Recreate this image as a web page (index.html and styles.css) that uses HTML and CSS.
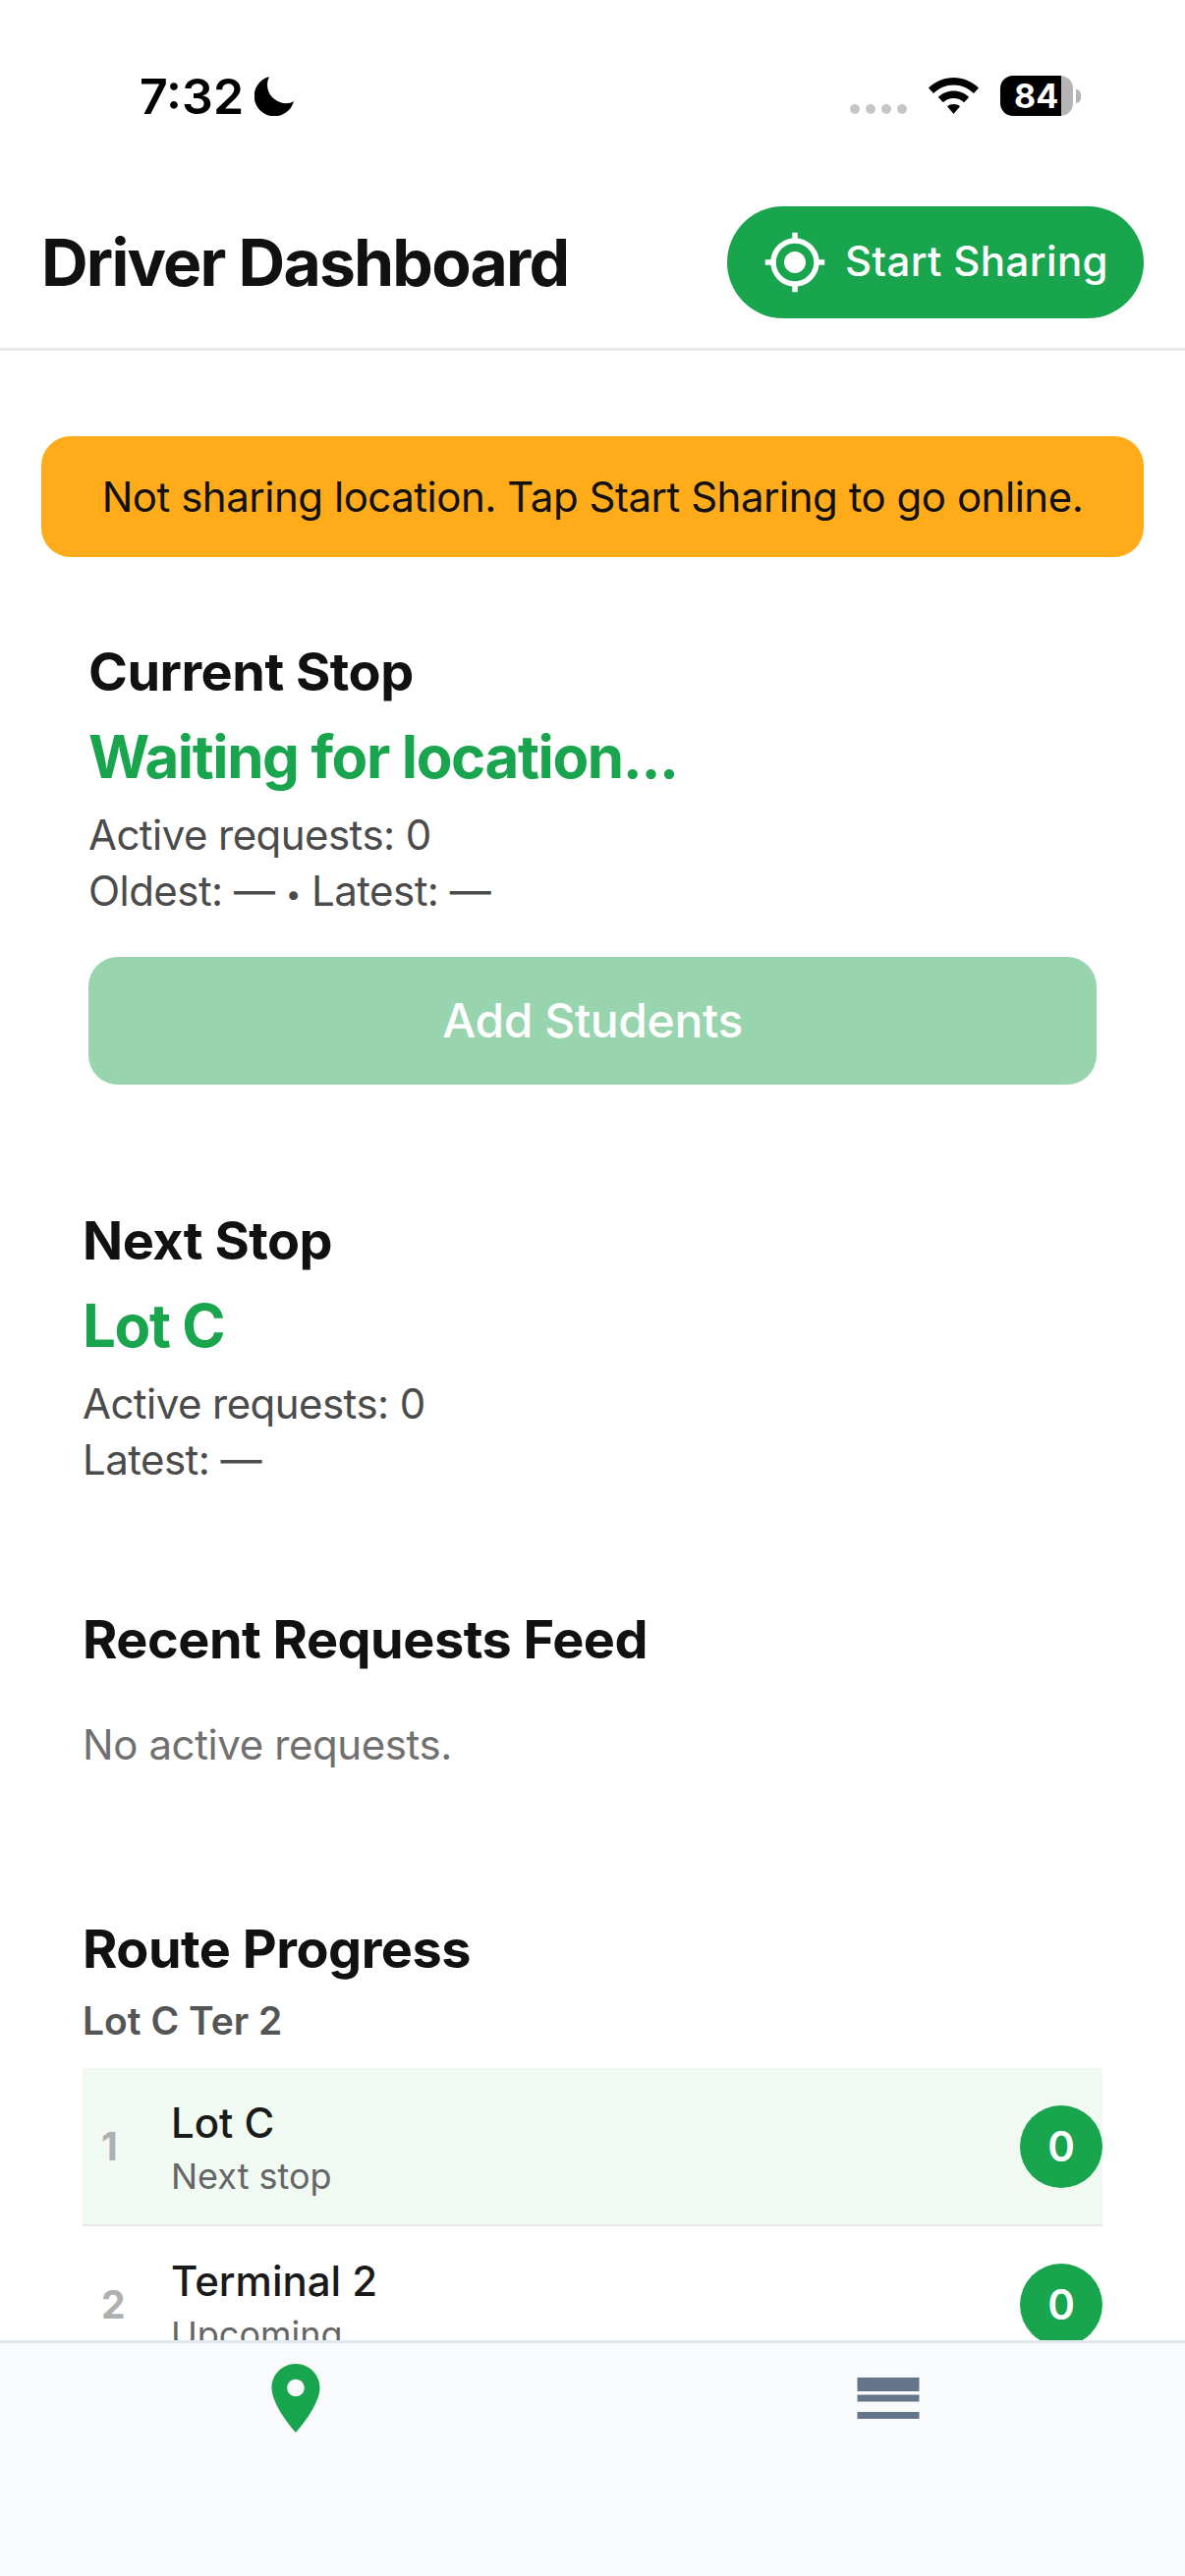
FILE: index.html
```html
<!DOCTYPE html>
<html>

	<head>
		<meta charset="UTF-8">
		<title>Driver Dashboard</title>
		<link rel="stylesheet" href="styles.css">
	</head>

	<body>
		<div class="status-bar">
			<div class="status-left">
				<span class="time">7:32</span>
				<svg class="moon" viewBox="0 0 40 40"><path d="M15 0A20.500 20.500 0 1 0 40 25C36 27.500 31 28 26 26 15 22 10 11 15 0z"/></svg>
			</div>
			<div class="status-right">
				<div class="dots"><i></i><i></i><i></i><i></i></div>
				<svg class="wifi" viewBox="0 0 51 37"><path d="M25.500 0C35 0 44 3.800 51 10.500L46 16C40.500 10.800 33.200 7.500 25.500 7.500S10.500 10.800 5 16L0 10.500C7 3.800 16 0 25.500 0z"/><path d="M25.500 13.500C31.500 13.500 37 15.800 41.200 19.800L36.200 25.200C33.300 22.500 29.500 21 25.500 21S17.700 22.500 14.800 25.200L9.800 19.800C14 15.800 19.500 13.500 25.500 13.500z"/><path d="M25.500 27C28 27 30.200 27.800 32 29.300L25.500 37 19 29.300C20.800 27.800 23 27 25.500 27z"/></svg>
				<div class="battery"><div class="battery-body"><span>84</span></div><div class="battery-nub"></div></div>
			</div>
		</div>

		<div class="header">
			<h1>Driver Dashboard</h1>
			<div class="share-btn">
				<svg viewBox="0 0 24 24"><path d="M12 8c-2.210 0-4 1.790-4 4s1.790 4 4 4 4-1.790 4-4-1.790-4-4-4zm8.940 3c-.460-4.170-3.770-7.480-7.940-7.940V1h-2v2.060C6.830 3.520 3.520 6.830 3.060 11H1v2h2.060c.460 4.170 3.770 7.480 7.940 7.940V23h2v-2.060c4.170-.460 7.480-3.770 7.940-7.940H23v-2h-2.060zM12 19c-3.870 0-7-3.130-7-7s3.130-7 7-7 7 3.130 7 7-3.130 7-7 7z"/></svg>
				<span class="share-label">Start Sharing</span>
			</div>
		</div>

		<div class="main">
			<div class="banner">Not sharing location. Tap Start Sharing to go online.</div>

			<div class="current">
				<h2>Current Stop</h2>
				<div class="stop-name">Waiting for location...</div>
				<p class="meta">Active requests: 0</p>
				<p class="meta">Oldest: — <span class="sep">•</span> Latest: —</p>
				<div class="add-btn">Add Students</div>
			</div>

			<div class="section next">
				<h2>Next Stop</h2>
				<div class="stop-name">Lot C</div>
				<p class="meta">Active requests: 0</p>
				<p class="meta">Latest: —</p>
			</div>

			<div class="section feed">
				<h2>Recent Requests Feed</h2>
				<p class="empty">No active requests.</p>
			</div>

			<div class="section route">
				<h2>Route Progress</h2>
				<div class="route-name">Lot C Ter 2</div>
				<div class="row row-next">
					<span class="num">1</span>
					<div class="row-text">
						<div class="row-title">Lot C</div>
						<div class="row-sub">Next stop</div>
					</div>
					<span class="count">0</span>
				</div>
				<div class="row">
					<span class="num">2</span>
					<div class="row-text">
						<div class="row-title">Terminal 2</div>
						<div class="row-sub">Upcoming</div>
					</div>
					<span class="count">0</span>
				</div>
			</div>
		</div>

		<div class="tabs">
			<div class="tab">
				<svg class="pin" viewBox="0 0 24 24"><path d="M12 2C8.130 2 5 5.130 5 9c0 5.250 7 13 7 13s7-7.750 7-13c0-3.870-3.130-7-7-7zm0 9.500c-1.380 0-2.500-1.120-2.500-2.500s1.120-2.500 2.500-2.500 2.500 1.120 2.500 2.500-1.120 2.500-2.500 2.500z"/></svg>
			</div>
			<div class="tab">
				<svg class="menu" viewBox="0 0 24 24"><path d="M3 18h18v-2H3v2zm0-5h18v-2H3v2zm0-5v2h18V6H3z"/></svg>
			</div>
		</div>
	</body>

</html>
```

FILE: styles.css
```css
* {
	box-sizing: border-box;
}

html, body {
	margin: 0;
	padding: 0;
}

body {
	width: 1206px;
	height: 2622px;
	display: flex;
	flex-direction: column;
	overflow: hidden;
	background-color: #fff;
	font-family: "Inter", "Liberation Sans", sans-serif;
	color: #111;
}

h1, h2, p {
	margin: 0;
}

/* status bar */
.status-bar {
	height: 190px;
	flex-shrink: 0;
	display: flex;
	justify-content: space-between;
	padding: 69px 106px 0 142px;
}

.status-left {
	display: flex;
	align-items: flex-start;
}

.time {
	font-size: 50px;
	font-weight: 600;
	line-height: 58px;
	color: #000;
}

.moon {
	width: 40px;
	height: 40px;
	margin: 9px 0 0 11px;
	fill: #000;
}

.status-right {
	display: flex;
	align-items: flex-start;
}

.dots {
	display: flex;
	gap: 6px;
	margin: 37px 22px 0 0;
}

.dots i {
	display: block;
	width: 10px;
	height: 10px;
	border-radius: 5px;
	background-color: #c6c6c6;
}

.wifi {
	width: 51px;
	height: 37px;
	margin: 10px 22px 0 0;
	fill: #000;
}

.battery {
	display: flex;
	align-items: center;
	margin-top: 8px;
}

.battery-body {
	width: 74px;
	height: 41px;
	border-radius: 13px;
	background: linear-gradient(to right, #000 62px, #b5b5b5 62px);
	color: #fff;
	font-size: 34px;
	font-weight: 700;
	line-height: 41px;
	padding-left: 14px;
}

.battery-nub {
	width: 5px;
	height: 14px;
	margin-left: 3px;
	border-radius: 0 7px 7px 0;
	background-color: #b5b5b5;
}

/* header */
.header {
	height: 167px;
	flex-shrink: 0;
	display: flex;
	justify-content: space-between;
	align-items: flex-start;
	padding: 20px 42px 0;
	border-bottom: 3px solid #e5e7eb;
}

h1 {
	font-size: 66px;
	font-weight: 700;
	line-height: 114px;
	letter-spacing: -1.8px;
}

.share-btn {
	width: 424px;
	height: 114px;
	display: flex;
	align-items: center;
	gap: 18px;
	padding-left: 36px;
	border-radius: 57px;
	background-color: #19a54d;
	color: #fff;
	font-size: 42px;
	font-weight: 500;
	letter-spacing: 0.4px;
}

.share-btn svg {
	width: 66px;
	height: 66px;
	fill: #fff;
}

.share-label {
	padding-bottom: 3px;
}

/* content */
.main {
	flex: 1;
	min-height: 0;
	overflow: hidden;
	padding: 87px 42px 0;
}

.banner {
	height: 123px;
	border-radius: 30px;
	background-color: #ffab1a;
	color: #111;
	font-size: 42px;
	letter-spacing: -0.48px;
	line-height: 123px;
	text-align: center;
}

h2 {
	font-size: 54px;
	font-weight: 700;
	line-height: 66px;
	letter-spacing: -0.5px;
	color: #111;
}

.current {
	padding: 84px 48px 0 48px;
}

.stop-name {
	font-size: 60px;
	font-weight: 700;
	line-height: 72px;
	letter-spacing: -1.4px;
	margin-top: 17px;
	color: #19a54d;
}

.meta {
	font-size: 42px;
	letter-spacing: -0.55px;
	line-height: 57px;
	color: #4b4b4b;
}

.sep {
	font-size: 28px;
	vertical-align: 2px;
}

.stop-name + .meta {
	margin-top: 15px;
}

.add-btn {
	height: 130px;
	margin-top: 35px;
	border-radius: 30px;
	background-color: #98d5ae;
	color: #fff;
	font-size: 48px;
	font-weight: 500;
	letter-spacing: -0.4px;
	line-height: 130px;
	text-align: center;
}

.section {
	padding: 0 42px;
}

.next {
	margin-top: 126px;
}

.feed {
	margin-top: 122px;
}

.empty {
	font-size: 42px;
	letter-spacing: -0.4px;
	line-height: 56px;
	margin-top: 46px;
	color: #707070;
}

.route {
	margin-top: 147px;
}

.route-name {
	font-size: 39px;
	font-weight: 600;
	line-height: 56px;
	margin-top: 12px;
	color: #555;
}

.row {
	height: 161px;
	display: flex;
	align-items: center;
	border-bottom: 2px solid #e5e7eb;
}

.row-next {
	margin-top: 20px;
	background-color: #f0faf3;
}

.num {
	width: 90px;
	padding-left: 19px;
	font-size: 39px;
	font-weight: 700;
	color: #b0b0b0;
}

.row-text {
	flex: 1;
}

.row-title {
	font-size: 42px;
	font-weight: 500;
	line-height: 58px;
	margin-top: 2px;
	color: #1a1a1a;
}

.row-sub {
	font-size: 36px;
	line-height: 50px;
	margin-top: 0;
	color: #666;
}

.count {
	width: 84px;
	height: 84px;
	border-radius: 42px;
	background-color: #19a54d;
	color: #fff;
	font-size: 42px;
	font-weight: 600;
	line-height: 84px;
	text-align: center;
}

/* bottom tabs */
.tabs {
	height: 240px;
	flex-shrink: 0;
	display: flex;
	padding: 14px 1px 0 0;
	border-top: 3px solid #e2e8f0;
	background-color: #f8fafc;
}

.tab {
	flex: 1;
	display: flex;
	justify-content: center;
	align-items: flex-start;
}

.tab svg {
	width: 84px;
	height: 84px;
}

.pin {
	fill: #19a54d;
}

.menu {
	fill: #64748b;
}
```
